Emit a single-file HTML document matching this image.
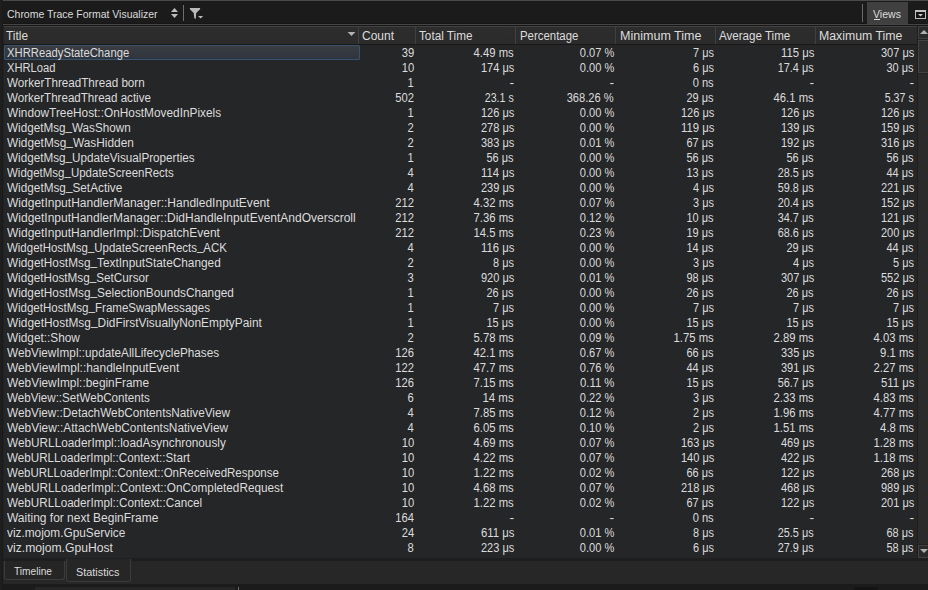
<!DOCTYPE html>
<html><head><meta charset="utf-8">
<style>
*{margin:0;padding:0;box-sizing:border-box}
html,body{width:928px;height:590px;overflow:hidden;background:#1b1b1b;font-family:"Liberation Sans",sans-serif;font-size:12px;color:#dcdcdc}
.a{position:absolute}
.t,.n{position:absolute;line-height:15px;height:15px;white-space:pre}
.t{transform-origin:0 0}
.u{position:relative;top:-2px}
.n{transform-origin:100% 0;transform:scaleX(0.95)}
</style></head><body>
<!-- left strip -->
<div class="a" style="left:0;top:0;width:2px;height:590px;background:#1e1e1e"></div>
<div class="a" style="left:2px;top:0;width:1px;height:590px;background:#1a1a1a"></div>
<!-- toolbar -->
<div class="a" style="left:3px;top:0;width:925px;height:1px;background:#4a4a4a"></div>
<div class="a" style="left:3px;top:1px;width:925px;height:22px;background:#1b1b1b"></div>
<div class="a" style="left:3px;top:23px;width:925px;height:1px;background:#161616"></div>
<div class="a" style="left:3px;top:24px;width:925px;height:1px;background:#454545"></div>
<div class="a" style="left:3px;top:25px;width:925px;height:1px;background:#171717"></div>
<svg class="a" style="left:0;top:0" width="928" height="26">
  <polygon points="171,12 178,12 174.5,8" fill="#bdbdbd"/>
  <polygon points="171,14 178,14 174.5,18" fill="#bdbdbd"/>
  <rect x="183" y="5" width="1" height="16" fill="#6e6e6e"/>
  <polygon points="189.9,8 200.1,8 200.1,9.3 196.2,12.9 195.8,18.4 195.1,18.9 194.3,17.9 193.7,12.9 189.9,9.3" fill="#bababa"/>
  <polygon points="198,16 203.2,16 200.6,18.4" fill="#bababa"/>
  <rect x="862" y="4" width="1" height="18" fill="#6a6a6a"/>
  <rect x="867" y="2" width="41" height="22" fill="#404040"/>
  <rect x="874" y="19" width="6" height="1" fill="#dcdcdc"/>
  <rect x="915" y="10" width="11" height="9" fill="#bebebe"/>
  <rect x="916" y="12" width="9" height="6" fill="#141414"/>
  <polygon points="918,14 923,14 920.5,16.5" fill="#c8c8c8"/>
</svg>
<!-- header -->
<div class="a" style="left:3px;top:26px;width:914px;height:1px;background:#424242"></div>
<div class="a" style="left:3px;top:27px;width:914px;height:17px;background:linear-gradient(#2d2d2d,#2b2b2b)"></div>
<div class="a" style="left:3px;top:44px;width:914px;height:1px;background:#181818"></div>
<div class="a" style="left:3px;top:26px;width:1px;height:18px;background:#242424"></div>
<div class="a" style="left:358px;top:27px;width:1px;height:17px;background:#404040"></div>
<div class="a" style="left:415px;top:27px;width:1px;height:17px;background:#404040"></div>
<div class="a" style="left:515px;top:27px;width:1px;height:17px;background:#404040"></div>
<div class="a" style="left:615px;top:27px;width:1px;height:17px;background:#404040"></div>
<div class="a" style="left:715px;top:27px;width:1px;height:17px;background:#404040"></div>
<div class="a" style="left:815px;top:27px;width:1px;height:17px;background:#404040"></div>
<svg class="a" style="left:340px;top:26px" width="20" height="18"><polygon points="7.6,5.9 15.4,5.9 11.5,10" fill="#b2b2b2"/></svg>
<!-- grid -->
<div class="a" style="left:3px;top:45px;width:914px;height:513px;background:#252628"></div>
<div class="a" style="left:3px;top:45px;width:1px;height:513px;background:#222"></div>
<div class="a" style="left:4px;top:45px;width:356px;height:15px;background:linear-gradient(#3a3c40,#2f3540);border:1px solid #39536f;border-radius:1px"></div>
<div class="t" style="top:46px;left:7px;transform:scaleX(0.9394)">XHRReadyStateChange</div>
<div class="n" style="top:46px;right:514.0px;transform:scaleX(0.9357)">39</div>
<div class="n" style="top:46px;right:414.0px;transform:scaleX(0.9406)">4.49 ms</div>
<div class="n" style="top:46px;right:314.0px;transform:scaleX(0.9248)">0.07 %</div>
<div class="n" style="top:46px;right:214.0px;transform:scaleX(0.9096)">7 μs</div>
<div class="n" style="top:46px;right:114.0px;transform:scaleX(0.9423)">115 μs</div>
<div class="n" style="top:46px;right:14.0px;transform:scaleX(0.9192)">307 μs</div>
<div class="t" style="top:61px;left:7px;transform:scaleX(0.9321)">XHRLoad</div>
<div class="n" style="top:61px;right:514.0px;transform:scaleX(0.9357)">10</div>
<div class="n" style="top:61px;right:414.0px;transform:scaleX(0.9192)">174 μs</div>
<div class="n" style="top:61px;right:314.0px;transform:scaleX(0.9248)">0.00 %</div>
<div class="n" style="top:61px;right:214.0px;transform:scaleX(0.9096)">6 μs</div>
<div class="n" style="top:61px;right:114.0px;transform:scaleX(0.9076)">17.4 μs</div>
<div class="n" style="top:61px;right:14.0px;transform:scaleX(0.9153)">30 μs</div>
<div class="t" style="top:76px;left:7px;transform:scaleX(0.9708)">WorkerThreadThread born</div>
<div class="n" style="top:76px;right:514.0px;transform:scaleX(0.9346)">1</div>
<div class="n" style="top:76px;right:414.0px;transform:scaleX(1.1500)">-</div>
<div class="n" style="top:76px;right:314.0px;transform:scaleX(1.1500)">-</div>
<div class="n" style="top:76px;right:214.0px;transform:scaleX(0.9278)">0 ns</div>
<div class="n" style="top:76px;right:114.0px;transform:scaleX(1.1500)">-</div>
<div class="n" style="top:76px;right:14.0px;transform:scaleX(1.1500)">-</div>
<div class="t" style="top:91px;left:7px;transform:scaleX(0.9646)">WorkerThreadThread active</div>
<div class="n" style="top:91px;right:514.0px;transform:scaleX(0.9360)">502</div>
<div class="n" style="top:91px;right:414.0px;transform:scaleX(0.8852)">23.1 s</div>
<div class="n" style="top:91px;right:314.0px;transform:scaleX(0.9277)">368.26 %</div>
<div class="n" style="top:91px;right:214.0px;transform:scaleX(0.9153)">29 μs</div>
<div class="n" style="top:91px;right:114.0px;transform:scaleX(0.9406)">46.1 ms</div>
<div class="n" style="top:91px;right:14.0px;transform:scaleX(0.8852)">5.37 s</div>
<div class="t" style="top:106px;left:7px;transform:scaleX(0.9868)">WindowTreeHost::OnHostMovedInPixels</div>
<div class="n" style="top:106px;right:514.0px;transform:scaleX(0.9346)">1</div>
<div class="n" style="top:106px;right:414.0px;transform:scaleX(0.9192)">126 μs</div>
<div class="n" style="top:106px;right:314.0px;transform:scaleX(0.9248)">0.00 %</div>
<div class="n" style="top:106px;right:214.0px;transform:scaleX(0.9192)">126 μs</div>
<div class="n" style="top:106px;right:114.0px;transform:scaleX(0.9192)">126 μs</div>
<div class="n" style="top:106px;right:14.0px;transform:scaleX(0.9192)">126 μs</div>
<div class="t" style="top:121px;left:7px;transform:scaleX(0.9745)">WidgetMsg<span class="u">_</span>WasShown</div>
<div class="n" style="top:121px;right:514.0px;transform:scaleX(0.9346)">2</div>
<div class="n" style="top:121px;right:414.0px;transform:scaleX(0.9192)">278 μs</div>
<div class="n" style="top:121px;right:314.0px;transform:scaleX(0.9248)">0.00 %</div>
<div class="n" style="top:121px;right:214.0px;transform:scaleX(0.9423)">119 μs</div>
<div class="n" style="top:121px;right:114.0px;transform:scaleX(0.9192)">139 μs</div>
<div class="n" style="top:121px;right:14.0px;transform:scaleX(0.9192)">159 μs</div>
<div class="t" style="top:136px;left:7px;transform:scaleX(0.9885)">WidgetMsg<span class="u">_</span>WasHidden</div>
<div class="n" style="top:136px;right:514.0px;transform:scaleX(0.9346)">2</div>
<div class="n" style="top:136px;right:414.0px;transform:scaleX(0.9192)">383 μs</div>
<div class="n" style="top:136px;right:314.0px;transform:scaleX(0.9248)">0.01 %</div>
<div class="n" style="top:136px;right:214.0px;transform:scaleX(0.9153)">67 μs</div>
<div class="n" style="top:136px;right:114.0px;transform:scaleX(0.9192)">192 μs</div>
<div class="n" style="top:136px;right:14.0px;transform:scaleX(0.9192)">316 μs</div>
<div class="t" style="top:151px;left:7px;transform:scaleX(0.9748)">WidgetMsg<span class="u">_</span>UpdateVisualProperties</div>
<div class="n" style="top:151px;right:514.0px;transform:scaleX(0.9346)">1</div>
<div class="n" style="top:151px;right:414.0px;transform:scaleX(0.9153)">56 μs</div>
<div class="n" style="top:151px;right:314.0px;transform:scaleX(0.9248)">0.00 %</div>
<div class="n" style="top:151px;right:214.0px;transform:scaleX(0.9153)">56 μs</div>
<div class="n" style="top:151px;right:114.0px;transform:scaleX(0.9153)">56 μs</div>
<div class="n" style="top:151px;right:14.0px;transform:scaleX(0.9153)">56 μs</div>
<div class="t" style="top:166px;left:7px;transform:scaleX(0.9581)">WidgetMsg<span class="u">_</span>UpdateScreenRects</div>
<div class="n" style="top:166px;right:514.0px;transform:scaleX(0.9346)">4</div>
<div class="n" style="top:166px;right:414.0px;transform:scaleX(0.9423)">114 μs</div>
<div class="n" style="top:166px;right:314.0px;transform:scaleX(0.9248)">0.00 %</div>
<div class="n" style="top:166px;right:214.0px;transform:scaleX(0.9153)">13 μs</div>
<div class="n" style="top:166px;right:114.0px;transform:scaleX(0.9076)">28.5 μs</div>
<div class="n" style="top:166px;right:14.0px;transform:scaleX(0.9153)">44 μs</div>
<div class="t" style="top:181px;left:7px;transform:scaleX(0.9813)">WidgetMsg<span class="u">_</span>SetActive</div>
<div class="n" style="top:181px;right:514.0px;transform:scaleX(0.9346)">4</div>
<div class="n" style="top:181px;right:414.0px;transform:scaleX(0.9192)">239 μs</div>
<div class="n" style="top:181px;right:314.0px;transform:scaleX(0.9248)">0.00 %</div>
<div class="n" style="top:181px;right:214.0px;transform:scaleX(0.9096)">4 μs</div>
<div class="n" style="top:181px;right:114.0px;transform:scaleX(0.9076)">59.8 μs</div>
<div class="n" style="top:181px;right:14.0px;transform:scaleX(0.9192)">221 μs</div>
<div class="t" style="top:196px;left:7px;transform:scaleX(1.0016)">WidgetInputHandlerManager::HandledInputEvent</div>
<div class="n" style="top:196px;right:514.0px;transform:scaleX(0.9360)">212</div>
<div class="n" style="top:196px;right:414.0px;transform:scaleX(0.9406)">4.32 ms</div>
<div class="n" style="top:196px;right:314.0px;transform:scaleX(0.9248)">0.07 %</div>
<div class="n" style="top:196px;right:214.0px;transform:scaleX(0.9096)">3 μs</div>
<div class="n" style="top:196px;right:114.0px;transform:scaleX(0.9076)">20.4 μs</div>
<div class="n" style="top:196px;right:14.0px;transform:scaleX(0.9192)">152 μs</div>
<div class="t" style="top:211px;left:7px;transform:scaleX(0.9995)">WidgetInputHandlerManager::DidHandleInputEventAndOverscroll</div>
<div class="n" style="top:211px;right:514.0px;transform:scaleX(0.9360)">212</div>
<div class="n" style="top:211px;right:414.0px;transform:scaleX(0.9406)">7.36 ms</div>
<div class="n" style="top:211px;right:314.0px;transform:scaleX(0.9248)">0.12 %</div>
<div class="n" style="top:211px;right:214.0px;transform:scaleX(0.9153)">10 μs</div>
<div class="n" style="top:211px;right:114.0px;transform:scaleX(0.9076)">34.7 μs</div>
<div class="n" style="top:211px;right:14.0px;transform:scaleX(0.9192)">121 μs</div>
<div class="t" style="top:226px;left:7px;transform:scaleX(1.0006)">WidgetInputHandlerImpl::DispatchEvent</div>
<div class="n" style="top:226px;right:514.0px;transform:scaleX(0.9360)">212</div>
<div class="n" style="top:226px;right:414.0px;transform:scaleX(0.9406)">14.5 ms</div>
<div class="n" style="top:226px;right:314.0px;transform:scaleX(0.9248)">0.23 %</div>
<div class="n" style="top:226px;right:214.0px;transform:scaleX(0.9153)">19 μs</div>
<div class="n" style="top:226px;right:114.0px;transform:scaleX(0.9076)">68.6 μs</div>
<div class="n" style="top:226px;right:14.0px;transform:scaleX(0.9192)">200 μs</div>
<div class="t" style="top:241px;left:7px;transform:scaleX(0.9556)">WidgetHostMsg<span class="u">_</span>UpdateScreenRects<span class="u">_</span>ACK</div>
<div class="n" style="top:241px;right:514.0px;transform:scaleX(0.9346)">4</div>
<div class="n" style="top:241px;right:414.0px;transform:scaleX(0.9423)">116 μs</div>
<div class="n" style="top:241px;right:314.0px;transform:scaleX(0.9248)">0.00 %</div>
<div class="n" style="top:241px;right:214.0px;transform:scaleX(0.9153)">14 μs</div>
<div class="n" style="top:241px;right:114.0px;transform:scaleX(0.9153)">29 μs</div>
<div class="n" style="top:241px;right:14.0px;transform:scaleX(0.9153)">44 μs</div>
<div class="t" style="top:256px;left:7px;transform:scaleX(0.9857)">WidgetHostMsg<span class="u">_</span>TextInputStateChanged</div>
<div class="n" style="top:256px;right:514.0px;transform:scaleX(0.9346)">2</div>
<div class="n" style="top:256px;right:414.0px;transform:scaleX(0.9096)">8 μs</div>
<div class="n" style="top:256px;right:314.0px;transform:scaleX(0.9248)">0.00 %</div>
<div class="n" style="top:256px;right:214.0px;transform:scaleX(0.9096)">3 μs</div>
<div class="n" style="top:256px;right:114.0px;transform:scaleX(0.9096)">4 μs</div>
<div class="n" style="top:256px;right:14.0px;transform:scaleX(0.9096)">5 μs</div>
<div class="t" style="top:271px;left:7px;transform:scaleX(0.9767)">WidgetHostMsg<span class="u">_</span>SetCursor</div>
<div class="n" style="top:271px;right:514.0px;transform:scaleX(0.9346)">3</div>
<div class="n" style="top:271px;right:414.0px;transform:scaleX(0.9192)">920 μs</div>
<div class="n" style="top:271px;right:314.0px;transform:scaleX(0.9248)">0.01 %</div>
<div class="n" style="top:271px;right:214.0px;transform:scaleX(0.9153)">98 μs</div>
<div class="n" style="top:271px;right:114.0px;transform:scaleX(0.9192)">307 μs</div>
<div class="n" style="top:271px;right:14.0px;transform:scaleX(0.9192)">552 μs</div>
<div class="t" style="top:286px;left:7px;transform:scaleX(0.9859)">WidgetHostMsg<span class="u">_</span>SelectionBoundsChanged</div>
<div class="n" style="top:286px;right:514.0px;transform:scaleX(0.9346)">1</div>
<div class="n" style="top:286px;right:414.0px;transform:scaleX(0.9153)">26 μs</div>
<div class="n" style="top:286px;right:314.0px;transform:scaleX(0.9248)">0.00 %</div>
<div class="n" style="top:286px;right:214.0px;transform:scaleX(0.9153)">26 μs</div>
<div class="n" style="top:286px;right:114.0px;transform:scaleX(0.9153)">26 μs</div>
<div class="n" style="top:286px;right:14.0px;transform:scaleX(0.9153)">26 μs</div>
<div class="t" style="top:301px;left:7px;transform:scaleX(0.9628)">WidgetHostMsg<span class="u">_</span>FrameSwapMessages</div>
<div class="n" style="top:301px;right:514.0px;transform:scaleX(0.9346)">1</div>
<div class="n" style="top:301px;right:414.0px;transform:scaleX(0.9096)">7 μs</div>
<div class="n" style="top:301px;right:314.0px;transform:scaleX(0.9248)">0.00 %</div>
<div class="n" style="top:301px;right:214.0px;transform:scaleX(0.9096)">7 μs</div>
<div class="n" style="top:301px;right:114.0px;transform:scaleX(0.9096)">7 μs</div>
<div class="n" style="top:301px;right:14.0px;transform:scaleX(0.9096)">7 μs</div>
<div class="t" style="top:316px;left:7px;transform:scaleX(0.9907)">WidgetHostMsg<span class="u">_</span>DidFirstVisuallyNonEmptyPaint</div>
<div class="n" style="top:316px;right:514.0px;transform:scaleX(0.9346)">1</div>
<div class="n" style="top:316px;right:414.0px;transform:scaleX(0.9153)">15 μs</div>
<div class="n" style="top:316px;right:314.0px;transform:scaleX(0.9248)">0.00 %</div>
<div class="n" style="top:316px;right:214.0px;transform:scaleX(0.9153)">15 μs</div>
<div class="n" style="top:316px;right:114.0px;transform:scaleX(0.9153)">15 μs</div>
<div class="n" style="top:316px;right:14.0px;transform:scaleX(0.9153)">15 μs</div>
<div class="t" style="top:331px;left:7px;transform:scaleX(0.9845)">Widget::Show</div>
<div class="n" style="top:331px;right:514.0px;transform:scaleX(0.9346)">2</div>
<div class="n" style="top:331px;right:414.0px;transform:scaleX(0.9406)">5.78 ms</div>
<div class="n" style="top:331px;right:314.0px;transform:scaleX(0.9248)">0.09 %</div>
<div class="n" style="top:331px;right:214.0px;transform:scaleX(0.9406)">1.75 ms</div>
<div class="n" style="top:331px;right:114.0px;transform:scaleX(0.9406)">2.89 ms</div>
<div class="n" style="top:331px;right:14.0px;transform:scaleX(0.9406)">4.03 ms</div>
<div class="t" style="top:346px;left:7px;transform:scaleX(0.9808)">WebViewImpl::updateAllLifecyclePhases</div>
<div class="n" style="top:346px;right:514.0px;transform:scaleX(0.9360)">126</div>
<div class="n" style="top:346px;right:414.0px;transform:scaleX(0.9406)">42.1 ms</div>
<div class="n" style="top:346px;right:314.0px;transform:scaleX(0.9248)">0.67 %</div>
<div class="n" style="top:346px;right:214.0px;transform:scaleX(0.9153)">66 μs</div>
<div class="n" style="top:346px;right:114.0px;transform:scaleX(0.9192)">335 μs</div>
<div class="n" style="top:346px;right:14.0px;transform:scaleX(0.9413)">9.1 ms</div>
<div class="t" style="top:361px;left:7px;transform:scaleX(0.9954)">WebViewImpl::handleInputEvent</div>
<div class="n" style="top:361px;right:514.0px;transform:scaleX(0.9360)">122</div>
<div class="n" style="top:361px;right:414.0px;transform:scaleX(0.9406)">47.7 ms</div>
<div class="n" style="top:361px;right:314.0px;transform:scaleX(0.9248)">0.76 %</div>
<div class="n" style="top:361px;right:214.0px;transform:scaleX(0.9153)">44 μs</div>
<div class="n" style="top:361px;right:114.0px;transform:scaleX(0.9192)">391 μs</div>
<div class="n" style="top:361px;right:14.0px;transform:scaleX(0.9406)">2.27 ms</div>
<div class="t" style="top:376px;left:7px;transform:scaleX(0.9887)">WebViewImpl::beginFrame</div>
<div class="n" style="top:376px;right:514.0px;transform:scaleX(0.9360)">126</div>
<div class="n" style="top:376px;right:414.0px;transform:scaleX(0.9406)">7.15 ms</div>
<div class="n" style="top:376px;right:314.0px;transform:scaleX(0.9474)">0.11 %</div>
<div class="n" style="top:376px;right:214.0px;transform:scaleX(0.9153)">15 μs</div>
<div class="n" style="top:376px;right:114.0px;transform:scaleX(0.9076)">56.7 μs</div>
<div class="n" style="top:376px;right:14.0px;transform:scaleX(0.9423)">511 μs</div>
<div class="t" style="top:391px;left:7px;transform:scaleX(0.9680)">WebView::SetWebContents</div>
<div class="n" style="top:391px;right:514.0px;transform:scaleX(0.9346)">6</div>
<div class="n" style="top:391px;right:414.0px;transform:scaleX(0.9576)">14 ms</div>
<div class="n" style="top:391px;right:314.0px;transform:scaleX(0.9248)">0.22 %</div>
<div class="n" style="top:391px;right:214.0px;transform:scaleX(0.9096)">3 μs</div>
<div class="n" style="top:391px;right:114.0px;transform:scaleX(0.9406)">2.33 ms</div>
<div class="n" style="top:391px;right:14.0px;transform:scaleX(0.9406)">4.83 ms</div>
<div class="t" style="top:406px;left:7px;transform:scaleX(0.9814)">WebView::DetachWebContentsNativeView</div>
<div class="n" style="top:406px;right:514.0px;transform:scaleX(0.9346)">4</div>
<div class="n" style="top:406px;right:414.0px;transform:scaleX(0.9406)">7.85 ms</div>
<div class="n" style="top:406px;right:314.0px;transform:scaleX(0.9248)">0.12 %</div>
<div class="n" style="top:406px;right:214.0px;transform:scaleX(0.9096)">2 μs</div>
<div class="n" style="top:406px;right:114.0px;transform:scaleX(0.9406)">1.96 ms</div>
<div class="n" style="top:406px;right:14.0px;transform:scaleX(0.9406)">4.77 ms</div>
<div class="t" style="top:421px;left:7px;transform:scaleX(0.9904)">WebView::AttachWebContentsNativeView</div>
<div class="n" style="top:421px;right:514.0px;transform:scaleX(0.9346)">4</div>
<div class="n" style="top:421px;right:414.0px;transform:scaleX(0.9406)">6.05 ms</div>
<div class="n" style="top:421px;right:314.0px;transform:scaleX(0.9248)">0.10 %</div>
<div class="n" style="top:421px;right:214.0px;transform:scaleX(0.9096)">2 μs</div>
<div class="n" style="top:421px;right:114.0px;transform:scaleX(0.9406)">1.51 ms</div>
<div class="n" style="top:421px;right:14.0px;transform:scaleX(0.9413)">4.8 ms</div>
<div class="t" style="top:436px;left:7px;transform:scaleX(0.9831)">WebURLLoaderImpl::loadAsynchronously</div>
<div class="n" style="top:436px;right:514.0px;transform:scaleX(0.9357)">10</div>
<div class="n" style="top:436px;right:414.0px;transform:scaleX(0.9406)">4.69 ms</div>
<div class="n" style="top:436px;right:314.0px;transform:scaleX(0.9248)">0.07 %</div>
<div class="n" style="top:436px;right:214.0px;transform:scaleX(0.9192)">163 μs</div>
<div class="n" style="top:436px;right:114.0px;transform:scaleX(0.9192)">469 μs</div>
<div class="n" style="top:436px;right:14.0px;transform:scaleX(0.9406)">1.28 ms</div>
<div class="t" style="top:451px;left:7px;transform:scaleX(0.9712)">WebURLLoaderImpl::Context::Start</div>
<div class="n" style="top:451px;right:514.0px;transform:scaleX(0.9357)">10</div>
<div class="n" style="top:451px;right:414.0px;transform:scaleX(0.9406)">4.22 ms</div>
<div class="n" style="top:451px;right:314.0px;transform:scaleX(0.9248)">0.07 %</div>
<div class="n" style="top:451px;right:214.0px;transform:scaleX(0.9192)">140 μs</div>
<div class="n" style="top:451px;right:114.0px;transform:scaleX(0.9192)">422 μs</div>
<div class="n" style="top:451px;right:14.0px;transform:scaleX(0.9406)">1.18 ms</div>
<div class="t" style="top:466px;left:7px;transform:scaleX(0.9599)">WebURLLoaderImpl::Context::OnReceivedResponse</div>
<div class="n" style="top:466px;right:514.0px;transform:scaleX(0.9357)">10</div>
<div class="n" style="top:466px;right:414.0px;transform:scaleX(0.9406)">1.22 ms</div>
<div class="n" style="top:466px;right:314.0px;transform:scaleX(0.9248)">0.02 %</div>
<div class="n" style="top:466px;right:214.0px;transform:scaleX(0.9153)">66 μs</div>
<div class="n" style="top:466px;right:114.0px;transform:scaleX(0.9192)">122 μs</div>
<div class="n" style="top:466px;right:14.0px;transform:scaleX(0.9192)">268 μs</div>
<div class="t" style="top:481px;left:7px;transform:scaleX(0.9796)">WebURLLoaderImpl::Context::OnCompletedRequest</div>
<div class="n" style="top:481px;right:514.0px;transform:scaleX(0.9357)">10</div>
<div class="n" style="top:481px;right:414.0px;transform:scaleX(0.9406)">4.68 ms</div>
<div class="n" style="top:481px;right:314.0px;transform:scaleX(0.9248)">0.07 %</div>
<div class="n" style="top:481px;right:214.0px;transform:scaleX(0.9192)">218 μs</div>
<div class="n" style="top:481px;right:114.0px;transform:scaleX(0.9192)">468 μs</div>
<div class="n" style="top:481px;right:14.0px;transform:scaleX(0.9192)">989 μs</div>
<div class="t" style="top:496px;left:7px;transform:scaleX(0.9728)">WebURLLoaderImpl::Context::Cancel</div>
<div class="n" style="top:496px;right:514.0px;transform:scaleX(0.9357)">10</div>
<div class="n" style="top:496px;right:414.0px;transform:scaleX(0.9406)">1.22 ms</div>
<div class="n" style="top:496px;right:314.0px;transform:scaleX(0.9248)">0.02 %</div>
<div class="n" style="top:496px;right:214.0px;transform:scaleX(0.9153)">67 μs</div>
<div class="n" style="top:496px;right:114.0px;transform:scaleX(0.9192)">122 μs</div>
<div class="n" style="top:496px;right:14.0px;transform:scaleX(0.9192)">201 μs</div>
<div class="t" style="top:511px;left:7px;transform:scaleX(0.9979)">Waiting for next BeginFrame</div>
<div class="n" style="top:511px;right:514.0px;transform:scaleX(0.9360)">164</div>
<div class="n" style="top:511px;right:414.0px;transform:scaleX(1.1500)">-</div>
<div class="n" style="top:511px;right:314.0px;transform:scaleX(1.1500)">-</div>
<div class="n" style="top:511px;right:214.0px;transform:scaleX(0.9278)">0 ns</div>
<div class="n" style="top:511px;right:114.0px;transform:scaleX(1.1500)">-</div>
<div class="n" style="top:511px;right:14.0px;transform:scaleX(1.1500)">-</div>
<div class="t" style="top:526px;left:7px;transform:scaleX(0.9854)">viz.mojom.GpuService</div>
<div class="n" style="top:526px;right:514.0px;transform:scaleX(0.9357)">24</div>
<div class="n" style="top:526px;right:414.0px;transform:scaleX(0.9423)">611 μs</div>
<div class="n" style="top:526px;right:314.0px;transform:scaleX(0.9248)">0.01 %</div>
<div class="n" style="top:526px;right:214.0px;transform:scaleX(0.9096)">8 μs</div>
<div class="n" style="top:526px;right:114.0px;transform:scaleX(0.9076)">25.5 μs</div>
<div class="n" style="top:526px;right:14.0px;transform:scaleX(0.9153)">68 μs</div>
<div class="t" style="top:541px;left:7px;transform:scaleX(1.0114)">viz.mojom.GpuHost</div>
<div class="n" style="top:541px;right:514.0px;transform:scaleX(0.9346)">8</div>
<div class="n" style="top:541px;right:414.0px;transform:scaleX(0.9192)">223 μs</div>
<div class="n" style="top:541px;right:314.0px;transform:scaleX(0.9248)">0.00 %</div>
<div class="n" style="top:541px;right:214.0px;transform:scaleX(0.9096)">6 μs</div>
<div class="n" style="top:541px;right:114.0px;transform:scaleX(0.9076)">27.9 μs</div>
<div class="n" style="top:541px;right:14.0px;transform:scaleX(0.9153)">58 μs</div>
<!-- scrollbar -->
<div class="a" style="left:917px;top:26px;width:1px;height:532px;background:#1e1e1e"></div>
<div class="a" style="left:918px;top:26px;width:10px;height:532px;background:#2b2b2b"></div>
<div class="a" style="left:918px;top:39px;width:10px;height:1px;background:#222"></div>
<div class="a" style="left:918px;top:73px;width:10px;height:1px;background:#222"></div>
<div class="a" style="left:918px;top:544px;width:10px;height:1px;background:#222"></div>
<div class="a" style="left:918px;top:26px;width:12px;height:13px;background:#2a2a2a;border:1px solid #424242"></div>
<div class="a" style="left:918px;top:40px;width:12px;height:33px;background:#2e2e2e;border:1px solid #444"></div>
<div class="a" style="left:918px;top:545px;width:12px;height:13px;background:#2a2a2a;border:1px solid #424242"></div>
<svg class="a" style="left:918px;top:26px" width="10" height="532">
  <polygon points="2,8 10,8 6,4" fill="#b0b0b0"/>
  <polygon points="2,523 10,523 6,527" fill="#b0b0b0"/>
</svg>
<!-- tabs -->
<div class="a" style="left:3px;top:558px;width:925px;height:1px;background:#1f1f1f"></div>
<div class="a" style="left:3px;top:559px;width:925px;height:25px;background:#272727"></div>
<div class="a" style="left:3px;top:559px;width:925px;height:2px;background:#1e1e1e"></div>
<div class="a" style="left:4px;top:561px;width:61px;height:19px;background:#252525;border:1px solid #3c3c3c;border-top:none;border-radius:0 0 3px 3px"></div>
<div class="a" style="left:66px;top:559px;width:65px;height:23px;background:#262626;border:1px solid #3c3c3c;border-top:none;border-radius:0 0 3px 3px"></div>
<div class="t" style="top:7px;left:6.9px;font-size:11px;transform:scaleX(0.9518)">Chrome Trace Format Visualizer</div>
<div class="t" style="top:7px;left:873.0px;font-size:11px;transform:scaleX(0.9603)">Views</div>
<div class="t" style="top:29px;left:6px;transform:scaleX(0.9895)">Title</div>
<div class="t" style="top:29px;left:361.9px;transform:scaleX(0.9990)">Count</div>
<div class="t" style="top:29px;left:419.4px;transform:scaleX(0.9783)">Total Time</div>
<div class="t" style="top:29px;left:519.5px;transform:scaleX(0.9513)">Percentage</div>
<div class="t" style="top:29px;left:619.5px;transform:scaleX(1.0447)">Minimum Time</div>
<div class="t" style="top:29px;left:719.3px;transform:scaleX(0.9658)">Average Time</div>
<div class="t" style="top:29px;left:819.3px;transform:scaleX(1.0253)">Maximum Time</div>
<div class="t" style="top:564px;left:14px;font-size:11px;transform:scaleX(0.9230)">Timeline</div>
<div class="t" style="top:565px;left:76.2px;font-size:11px;transform:scaleX(0.9860)">Statistics</div>
<!-- bottom -->
<div class="a" style="left:35px;top:587px;width:200px;height:3px;background:#262626"></div>
<div class="a" style="left:238px;top:587px;width:1px;height:3px;background:#6a6a6a"></div>
<div class="a" style="left:854px;top:587px;width:24px;height:3px;background:#141414"></div>
</body></html>
